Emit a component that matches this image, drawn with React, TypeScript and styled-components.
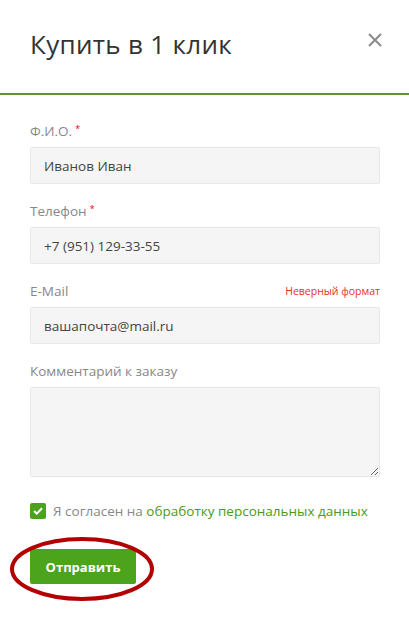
import styled, { createGlobalStyle } from "styled-components";

const GlobalStyle = createGlobalStyle`
  body {
    margin: 0;
    background: #fff;
    font-family: "Open Sans", "Noto Sans", sans-serif;
  }
  * { box-sizing: border-box; }
`;

interface FieldProps {
  label: string;
  required?: boolean;
  error?: string;
  value?: string;
}

const Field: React.FC<FieldProps> = ({ label, required, error, value }) => (
  <FieldWrap>
    <LabelRow>
      <Label>
        {label}
        {required && <Star>*</Star>}
      </Label>
      {error && <Error>{error}</Error>}
    </LabelRow>
    <Input defaultValue={value} />
  </FieldWrap>
);

const App = () => {
  return (
    <>
      <GlobalStyle />
      <Modal>
        <Header>
          <Title>Купить в 1 клик</Title>
          <Close aria-label="close">
            <svg width="14" height="14" viewBox="0 0 14 14">
              <path d="M1 1L13 13M13 1L1 13" stroke="#8a8a8a" strokeWidth="2" />
            </svg>
          </Close>
        </Header>
        <Form>
          <Field label="Ф.И.О." required value="Иванов Иван" />
          <Field label="Телефон" required value="+7 (951) 129-33-55" />
          <Field label="E-Mail" error="Неверный формат" value="вашапочта@mail.ru" />
          <FieldWrap>
            <LabelRow>
              <Label>Комментарий к заказу</Label>
            </LabelRow>
            <TextArea />
          </FieldWrap>
          <Agree>
            <Check>
              <svg width="10" height="8" viewBox="0 0 10 8">
                <path d="M1 4L3.8 6.6L9 1.2" stroke="#fff" strokeWidth="2" fill="none" />
              </svg>
            </Check>
            Я согласен на <AgreeLink href="#">обработку персональных данных</AgreeLink>
          </Agree>
          <SubmitWrap>
            <Submit>Отправить</Submit>
            <Ring width="146" height="66" viewBox="0 0 146 66">
              <ellipse cx="73" cy="33" rx="70" ry="30" fill="none" stroke="#b30000" strokeWidth="4" />
            </Ring>
          </SubmitWrap>
        </Form>
      </Modal>
    </>
  );
};

const Modal = styled.div`
  width: 409px;
  min-height: 617px;
  background: #fff;
`;

const Header = styled.div`
  display: flex;
  align-items: center;
  justify-content: space-between;
  height: 95px;
  padding: 0 27px 6px 30px;
  border-bottom: 2px solid #5b9236;
`;

const Title = styled.h2`
  margin: 0;
  font-size: 26px;
  font-weight: 400;
  color: #333;
  letter-spacing: 0.3px;
`;

const Close = styled.button`
  display: flex;
  padding: 0;
  border: 0;
  background: none;
  cursor: pointer;
  margin-top: -8px;
`;

const Form = styled.form`
  display: flex;
  flex-direction: column;
  padding: 27px 29px 0 30px;
`;

const FieldWrap = styled.div`
  display: flex;
  flex-direction: column;
  margin-bottom: 18px;
`;

const LabelRow = styled.div`
  display: flex;
  justify-content: space-between;
  align-items: center;
  height: 18px;
  margin-bottom: 7px;
`;

const Label = styled.span`
  font-size: 13.5px;
  color: #888;
`;

const Star = styled.span`
  color: #e3001b;
  font-size: 9px;
  vertical-align: top;
  margin-left: 3px;
`;

const Error = styled.span`
  font-size: 10.5px;
  color: #e8302c;
`;

const Input = styled.input`
  height: 37px;
  padding: 0 13px;
  border: 1px solid #e8e8e8;
  border-radius: 2px;
  background: #f5f5f5;
  font-family: inherit;
  font-size: 13.5px;
  color: #444;
  outline: none;
`;

const TextArea = styled.textarea`
  height: 90px;
  border: 1px solid #e8e8e8;
  border-radius: 2px;
  background: #f5f5f5;
  font-family: inherit;
  resize: vertical;
  outline: none;
`;

const Agree = styled.div`
  display: flex;
  align-items: center;
  margin-top: 7px;
  font-size: 13.5px;
  color: #888;
  white-space: pre;
`;

const Check = styled.span`
  display: flex;
  align-items: center;
  justify-content: center;
  width: 16px;
  height: 16px;
  margin-right: 7px;
  border-radius: 2px;
  background: #4da21d;
`;

const AgreeLink = styled.a`
  color: #4a9a1c;
  text-decoration: none;
`;

const SubmitWrap = styled.div`
  position: relative;
  align-self: flex-start;
  margin-top: 29px;
`;

const Submit = styled.button`
  width: 106px;
  height: 35px;
  border: 0;
  border-radius: 2px;
  background: #4ca41c;
  color: #fff;
  font-family: inherit;
  font-size: 13px;
  font-weight: 700;
  cursor: pointer;
`;

const Ring = styled.svg`
  position: absolute;
  left: -21px;
  top: -13px;
  pointer-events: none;
`;

export default App;
